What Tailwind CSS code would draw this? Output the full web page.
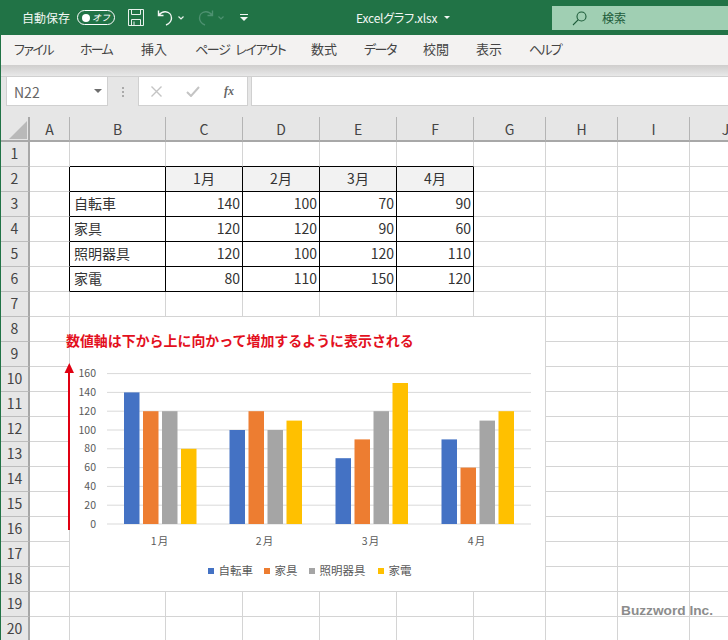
<!DOCTYPE html>
<html lang="ja">
<head>
<meta charset="utf-8" />
<title>Excelグラフ.xlsx</title>
<script src="https://cdn.jsdelivr.net/npm/@tailwindcss/browser@4"></script>
</head>
<body class="w-[728px] h-[640px] overflow-hidden bg-white font-['Noto_Sans_CJK_JP','Liberation_Sans',sans-serif]">
<div class="relative w-[728px] h-[640px] overflow-hidden flex flex-col">

  <!-- title bar -->
  <header class="relative h-[35px] shrink-0 bg-[#217346] text-white">
    <div class="flex items-center h-[35px] pl-[22px]">
      <span class="text-[12px] w-[55px] text-[#f2f7f4]">自動保存</span>
      <div class="flex items-center justify-between w-[38px] h-[15px] rounded-full border border-white pl-[4px] pr-[4px]">
        <span class="w-[8px] h-[8px] rounded-full bg-white"></span>
        <span class="text-[9px] leading-none italic">オフ</span>
      </div>
      <svg class="ml-[13px]" width="16" height="17" viewBox="0 0 16 17" fill="none" stroke="#e8f1ec" stroke-width="1"><path d="M.5.5h15v16H.5zM3.500.5v5h9v-5M3.500 16.500v-6h9v6M6 12.500v4"/></svg>
      <svg class="ml-[13px]" width="17" height="17" viewBox="0 0 17 17" fill="none" stroke="#f2f7f4" stroke-width="1.4"><path d="M1.500 1.500v5h5M1.800 6.200C4 3.400 6 2.600 8.500 2.800c3.500.3 6 3 6 6.200 0 3-2 5.500-5.500 7"/></svg>
      <svg class="ml-[4px]" width="6" height="4" viewBox="0 0 6 4" fill="none" stroke="#e8f1ec" stroke-width="1.200"><path d="M.5.5L3 3 5.500.5"/></svg>
      <svg class="ml-[13px]" width="17" height="17" viewBox="0 0 17 17" fill="none" stroke="#4d9170" stroke-width="1.4"><path d="M15.500 1.500v5h-5M15.200 6.200C13 3.400 11 2.600 8.500 2.800c-3.500.3-6 3-6 6.200 0 3 2 5.500 5.500 7"/></svg>
      <svg class="ml-[4px]" width="6" height="4" viewBox="0 0 6 4" fill="none" stroke="#4d9170" stroke-width="1.200"><path d="M.5.5L3 3 5.500.5"/></svg>
      <svg class="ml-[16px]" width="8" height="8" viewBox="0 0 8 8" fill="#f2f7f4"><path d="M0 0h8v1H0zM0 3h8L4 7z"/></svg>
      <div class="flex items-center ml-[108px] text-[12px] leading-none">
        <span class="[font-feature-settings:'palt'] w-[88px] tracking-[-0.2px] text-[#f2f7f4]">Excelグラフ.xlsx</span>
        <svg width="6" height="3" viewBox="0 0 6 3" fill="#f2f7f4"><path d="M0 0h6L3 3z"/></svg>
      </div>
    </div>
    <div class="absolute left-[552px] top-[6px] right-0 h-[24px] bg-[#a0cfb3] flex items-center pl-[20px] text-[12px] text-[#1d5c3a]">
      <svg width="15" height="15" viewBox="0 0 15 15" fill="none" stroke="#1d5c3a" stroke-width="1.100"><circle cx="9.500" cy="5.500" r="4.500"/><path d="M6.300 8.700 1 14"/></svg>
      <span class="ml-[15px]">検索</span>
    </div>
  </header>

  <div class="flex flex-col flex-1 min-h-0 border-l border-[#217346]">
    <!-- ribbon tabs -->
    <nav class="h-[30px] shrink-0 bg-[#f3f2f1] flex items-center pl-[13px] pb-[2px] text-[13px] text-[#444] [font-feature-settings:'palt']">
      <span class="w-[66px] tracking-[-1.500px]">ファイル</span>
      <span class="w-[61px] tracking-[-1.800px]">ホーム</span>
      <span class="w-[54px]">挿入</span>
      <span class="w-[116px] tracking-[-1.300px] [word-spacing:4px]">ページ レイアウト</span>
      <span class="w-[53px]">数式</span>
      <span class="w-[59px] tracking-[-1.500px]">データ</span>
      <span class="w-[53px]">校閲</span>
      <span class="w-[53px]">表示</span>
      <span class="tracking-[-1.800px]">ヘルプ</span>
    </nav>
    <div class="h-[11px] shrink-0 bg-linear-to-b from-[#cfcecd] to-[#e8e8e8]"></div>

    <!-- formula bar -->
    <div class="h-[41px] shrink-0 bg-[#e6e6e6] flex items-start border-t border-[#d0d0d0]">
      <div class="ml-[5px] w-[102px] h-[30px] -mt-px bg-white border border-[#d0d0d0] flex items-center justify-between pl-[7px] pr-[5px] text-[14px] text-[#666]">
        <span class="pt-[3px]">N22</span>
        <svg width="8" height="4" viewBox="0 0 8 4" fill="#6e6e6e"><path d="M0 0h8L4 4z"/></svg>
      </div>
      <div class="w-[30px] h-[30px] flex flex-col items-center justify-center gap-[2px]">
        <span class="w-[2px] h-[2px] bg-[#aaa]"></span><span class="w-[2px] h-[2px] bg-[#aaa]"></span><span class="w-[2px] h-[2px] bg-[#aaa]"></span>
      </div>
      <div class="w-[110px] h-[30px] -mt-px bg-white border border-[#d0d0d0] flex items-center pl-[12px]">
        <svg width="11" height="11" viewBox="0 0 11 11" fill="none" stroke="#c4c4c4" stroke-width="1.400"><path d="M.5.5l10 10M10.500.5l-10 10"/></svg>
        <svg class="ml-[24px]" width="14" height="11" viewBox="0 0 14 11" fill="none" stroke="#c4c4c4" stroke-width="2"><path d="M1 6l4 4 8-9"/></svg>
        <span class="ml-[24px] text-[12px] italic font-bold text-[#666] font-['Liberation_Serif',serif]">fx</span>
      </div>
      <div class="ml-[3px] flex-1 h-[30px] -mt-px bg-white border-y border-l border-[#d0d0d0]"></div>
    </div>

    <!-- sheet -->
    <div id="sheet" class="flex-1 min-h-0 bg-[#e6e6e6] grid content-start grid-cols-[29px_40px_96px_77px_77px_77px_77px_72px_72px_72px_72px] auto-rows-[25px] text-[14px] text-[#333]"></div>
  </div>

  <!-- chart lying over the sheet -->
  <svg class="absolute left-0 top-0" width="728" height="640" viewBox="0 0 728 640">
    <rect x="70" y="317" width="475" height="274" fill="#fff"/>
    <g id="chart"></g>
    <path d="M69 530V372" stroke="#e00012" stroke-width="2"/>
    <path d="M69.300 363l4.700 10h-9.500z" fill="#e00012"/>
    <text x="66" y="346" font-size="13.950" font-weight="700" fill="#e3101e">数値軸は下から上に向かって増加するように表示される</text>
    <text x="621" y="615" font-size="13.700" font-weight="700" fill="#8c8c8c" font-family="'Liberation Sans',sans-serif">Buzzword Inc.</text>
  </svg>
</div>

<script>
  const cols = ['A', 'B', 'C', 'D', 'E', 'F', 'G', 'H', 'I', 'J']
  const table = {
    2: ['', '1月', '2月', '3月', '4月'],
    3: ['自転車', 140, 100, 70, 90],
    4: ['家具', 120, 120, 90, 60],
    5: ['照明器具', 120, 100, 120, 110],
    6: ['家電', 80, 110, 150, 120]
  }
  const sheet = document.getElementById('sheet')

  let html = '<div class="relative border-r-2 border-b-2 border-[#a8a8a8]"><svg class="absolute left-[8px] top-[4px]" width="18" height="18" viewBox="0 0 18 18" fill="#b9b9b9"><path d="M18 0v18H0z"/></svg></div>'
  cols.forEach(c => {
    html += `<div class="flex items-center justify-center pt-[2px] border-r border-b-2 border-r-[#b4b4b4] border-b-[#a8a8a8] text-[#444]">${c}</div>`
  })

  for (let r = 1; r <= 20; r++) {
    html += `<div class="flex items-center justify-center pb-[2px] border-r-2 border-b border-r-[#a8a8a8] border-b-[#bdbdbd] text-[#444]">${r}</div>`
    cols.forEach((c, i) => {
      const inTable = i >= 1 && i <= 5
      const right = (r >= 2 && r <= 6 && i <= 5) ? 'border-r-black' : 'border-r-[#d4d4d4]'
      const bottom = (r >= 1 && r <= 6 && inTable) ? 'border-b-black' : 'border-b-[#d4d4d4]'
      const row = table[r]
      const val = row && inTable ? row[i - 1] : ''
      let align = 'justify-end pr-[2px]'
      if (i === 1) align = 'justify-start pl-[4px]'
      if (r === 2) align = 'justify-center'
      const bg = (r === 2 && i >= 2 && i <= 5) ? 'bg-[#f2f2f2]' : 'bg-white'
      html += `<div class="flex items-center pb-[2px] border-r border-b ${right} ${bottom} ${bg} ${align} text-[#333] leading-none">${val}</div>`
    })
  }
  sheet.innerHTML = html

  // chart
  const colors = ['#4472c4', '#ed7d31', '#a5a5a5', '#ffc000']
  const series = [[140, 120, 120, 80], [100, 120, 100, 110], [70, 90, 120, 150], [90, 60, 110, 120]]
  const groupX = [124, 229.5, 335.5, 441.5]
  const labelX = [160, 265, 371, 477]
  let svg = ''
  for (let v = 0; v <= 160; v += 20) {
    const y = 524 - v * 0.94
    svg += `<line x1="107" x2="531" y1="${y}" y2="${y}" stroke="#d9d9d9" stroke-width="1"/>`
    svg += `<text x="96" y="${y + 3.5}" text-anchor="end" font-size="10.5" fill="#595959">${v}</text>`
  }
  series.forEach((vals, g) => {
    vals.forEach((v, i) => {
      const h = v * 0.94
      svg += `<rect x="${groupX[g] + i * 19}" y="${524 - h}" width="15.5" height="${h}" fill="${colors[i]}"/>`
    })
    svg += `<text x="${labelX[g]}" y="545" text-anchor="middle" font-size="10.5" letter-spacing="1" fill="#595959">${g + 1}月</text>`
  })
  const legend = [[208, '自転車'], [264, '家具'], [309, '照明器具'], [378, '家電']]
  legend.forEach((l, i) => {
    svg += `<rect x="${l[0]}" y="568" width="6" height="6" fill="${colors[i]}"/>`
    svg += `<text x="${l[0] + 10.5}" y="575" font-size="11.5" fill="#595959">${l[1]}</text>`
  })
  document.getElementById('chart').innerHTML = svg
</script>
</body>
</html>
